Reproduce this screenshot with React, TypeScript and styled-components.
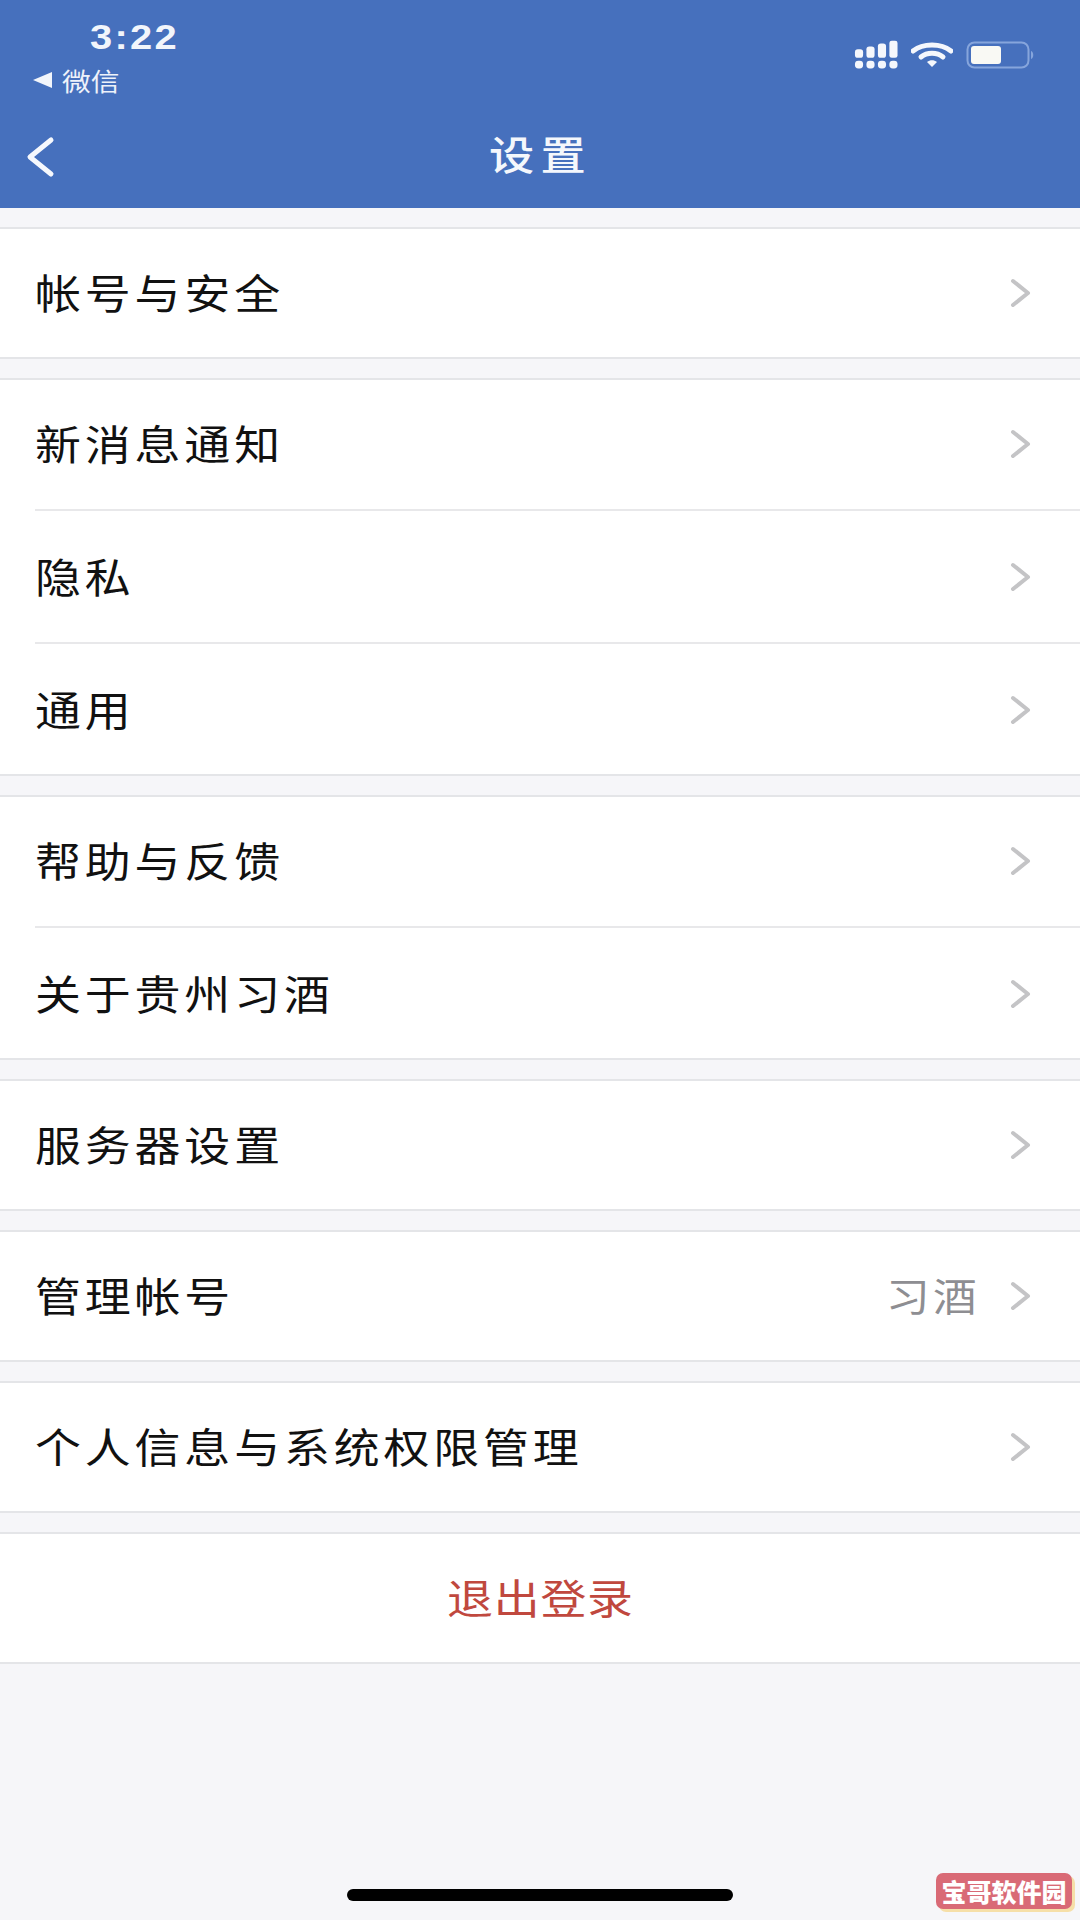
import React from "react";
import styled, { createGlobalStyle } from "styled-components";

const Global = createGlobalStyle`
  html, body { margin: 0; padding: 0; background: #f6f6f9; }
  #root { width: 1080px; height: 1920px; overflow: hidden; }
`;
const CJK = `"Noto Sans CJK SC", "Noto Sans", sans-serif`;

const Page = styled.div`
  position: relative;
  width: 1080px;
  height: 1920px;
  display: flex;
  flex-direction: column;
  background: #f6f6f9;
  font-family: ${CJK};
`;
const Header = styled.header`
  height: 208px;
  flex: none;
  background: #4670bd;
  color: #fff;
  display: flex;
  flex-direction: column;
`;
const StatusBar = styled.div`
  height: 111px;
  padding: 17px 44px 0 33px;
  box-sizing: border-box;
  display: flex;
  justify-content: space-between;
  align-items: flex-start;
`;
const StatusLeft = styled.div`
  display: flex;
  flex-direction: column;
`;
const Time = styled.div`
  font-family: "Liberation Sans", sans-serif;
  font-size: 35px;
  line-height: 40px;
  font-weight: 700;
  letter-spacing: 2px;
  margin-left: 57px;
  color: #f2f5fb;
  transform: scaleX(1.14);
  transform-origin: left center;
`;
const BackApp = styled.div`
  display: flex;
  align-items: center;
  gap: 10px;
  margin-top: 7px;
  font-size: 25px;
  line-height: 32px;
  color: #eef2fa;
`;
const BackAppLabel = styled.span`
  transform: scaleX(1.15);
  transform-origin: left center;
`;
const BackTriangle = styled.svg`
  width: 19px;
  height: 16px;
  flex: none;
`;
const StatusIcons = styled.div`
  display: flex;
  align-items: center;
  gap: 13px;
  margin-top: 23px;
`;
const NavBar = styled.div`
  position: relative;
  flex: 1;
  display: flex;
  align-items: flex-start;
  justify-content: center;
`;
const BackBtn = styled.svg`
  position: absolute;
  left: 25px;
  top: 25px;
  width: 30px;
  height: 42px;
`;
const Title = styled.h1`
  margin: 17px 0 0;
  font-size: 40px;
  line-height: 50px;
  font-weight: 500;
  letter-spacing: 5.5px;
  color: #f4f7fc;
  transform: scaleX(1.13);
`;
const List = styled.main`
  padding-top: 19px;
  display: flex;
  flex-direction: column;
  gap: 19px;
`;
const Group = styled.section`
  background: #fff;
  border-top: 2px solid #e4e5e8;
  border-bottom: 2px solid #e4e5e8;
`;
const Row = styled.div<{ $divider?: boolean }>`
  position: relative;
  height: ${(p) => (p.$divider ? 133 : 128)}px;
  box-sizing: border-box;
  padding: 0 48px ${(p) => (p.$divider ? 5 : 0)}px 35px;
  display: flex;
  align-items: center;
  ${(p) =>
    p.$divider
      ? `&::after { content: ""; position: absolute; left: 35px; right: 0; bottom: 2px; height: 2px; background: #e8e8ea; }`
      : ""}
`;
const LabelWrap = styled.div`
  flex: 1;
  min-width: 0;
  margin-top: -5px;
`;
const Label = styled.span`
  display: inline-block;
  font-size: 41px;
  line-height: 56px;
  letter-spacing: 3.45px;
  color: #111;
  transform: scaleX(1.12);
  transform-origin: left center;
`;
const Value = styled.span`
  font-size: 39px;
  line-height: 56px;
  letter-spacing: 3px;
  color: #8e8e92;
  margin: -5px 30px 0 0;
  transform: scaleX(1.12);
  transform-origin: right center;
`;
const Chevron = styled.svg`
  width: 22px;
  height: 30px;
  flex: none;
`;
const Logout = styled.div`
  height: 128px;
  display: flex;
  align-items: center;
  justify-content: center;
`;
const LogoutText = styled.span`
  font-size: 41px;
  margin-top: -5px;
  letter-spacing: 0.7px;
  color: #c0483e;
  transform: scaleX(1.12);
`;
const Spacer = styled.div`
  flex: 1;
  display: flex;
  align-items: flex-end;
  justify-content: center;
  padding-bottom: 19px;
`;
const HomeIndicator = styled.div`
  width: 386px;
  height: 12px;
  border-radius: 6px;
  background: #000;
`;
const Watermark = styled.div`
  position: absolute;
  left: 936px;
  top: 1873px;
  width: 136px;
  height: 36px;
  border-radius: 7px;
  background: #d96a76;
  box-shadow: 3px 3px 0 #f6dfa8;
  color: #fff;
  font-size: 25px;
  line-height: 36px;
  font-weight: 900;
  text-align: center;
  white-space: nowrap;
`;

const ChevronIcon = () => (
  <Chevron viewBox="0 0 22 30" fill="none">
    <path d="M3 3 L18 15 L3 27" stroke="#c4c4c6" strokeWidth="4" strokeLinecap="round" strokeLinejoin="round" />
  </Chevron>
);

const Item = ({ label, value, divider }: { label: string; value?: string; divider?: boolean }) => (
  <Row $divider={divider}>
    <LabelWrap>
      <Label>{label}</Label>
    </LabelWrap>
    {value && <Value>{value}</Value>}
    <ChevronIcon />
  </Row>
);

const SignalIcon = () => (
  <svg width="44" height="30" viewBox="0 0 46 30" fill="#f5f7fc">
    <rect x="1" y="9" width="8.5" height="9" rx="3" />
    <rect x="13" y="6" width="8.5" height="12" rx="3" />
    <rect x="25" y="3" width="8.5" height="15" rx="3" />
    <rect x="37" y="0" width="8.5" height="18" rx="2.5" />
    <rect x="1" y="21" width="8.5" height="8" rx="3.5" />
    <rect x="13" y="21" width="8.5" height="8" rx="3.5" />
    <rect x="25" y="21" width="8.5" height="8" rx="3.5" />
    <rect x="37" y="21" width="8.5" height="8" rx="3.5" />
  </svg>
);
const WifiIcon = () => (
  <svg width="42" height="26" viewBox="0 0 42 26" fill="none">
    <path d="M2 9 C 12 1, 30 1, 40 9" stroke="#f5f7fc" strokeWidth="5" strokeLinecap="round" />
    <path d="M10 15 C 16 10, 26 10, 32 15" stroke="#f5f7fc" strokeWidth="5" strokeLinecap="round" />
    <path d="M16 20 C 19 17.5, 23 17.5, 26 20 L21 25 Z" fill="#f5f7fc" />
  </svg>
);
const BatteryIcon = () => (
  <svg width="70" height="28" viewBox="0 0 70 28" fill="none">
    <rect x="1.5" y="1.5" width="61" height="25" rx="7" stroke="#86a5dc" strokeWidth="2" />
    <rect x="5" y="5" width="30" height="18" rx="3" fill="#f9f9f4" />
    <path d="M65 10 C 68 11, 68 17, 65 18 Z" fill="#86a5dc" />
  </svg>
);

export default function App() {
  return (
    <Page>
      <Global />
      <Header>
        <StatusBar>
          <StatusLeft>
            <Time>3:22</Time>
            <BackApp>
              <BackTriangle viewBox="0 0 19 16">
                <path d="M0 8 L19 0 V16 Z" fill="#f2f5fb" />
              </BackTriangle>
              <BackAppLabel>微信</BackAppLabel>
            </BackApp>
          </StatusLeft>
          <StatusIcons>
            <SignalIcon />
            <WifiIcon />
            <BatteryIcon />
          </StatusIcons>
        </StatusBar>
        <NavBar>
          <BackBtn viewBox="0 0 30 42" fill="none">
            <path d="M26 4 L5 21 L26 38" stroke="#f6f8fd" strokeWidth="5" strokeLinecap="round" strokeLinejoin="round" />
          </BackBtn>
          <Title>设置</Title>
        </NavBar>
      </Header>
      <List>
        <Group>
          <Item label="帐号与安全" />
        </Group>
        <Group>
          <Item label="新消息通知" divider />
          <Item label="隐私" divider />
          <Item label="通用" />
        </Group>
        <Group>
          <Item label="帮助与反馈" divider />
          <Item label="关于贵州习酒" />
        </Group>
        <Group>
          <Item label="服务器设置" />
        </Group>
        <Group>
          <Item label="管理帐号" value="习酒" />
        </Group>
        <Group>
          <Item label="个人信息与系统权限管理" />
        </Group>
        <Group>
          <Logout>
            <LogoutText>退出登录</LogoutText>
          </Logout>
        </Group>
      </List>
      <Spacer>
        <HomeIndicator />
      </Spacer>
      <Watermark>宝哥软件园</Watermark>
    </Page>
  );
}
